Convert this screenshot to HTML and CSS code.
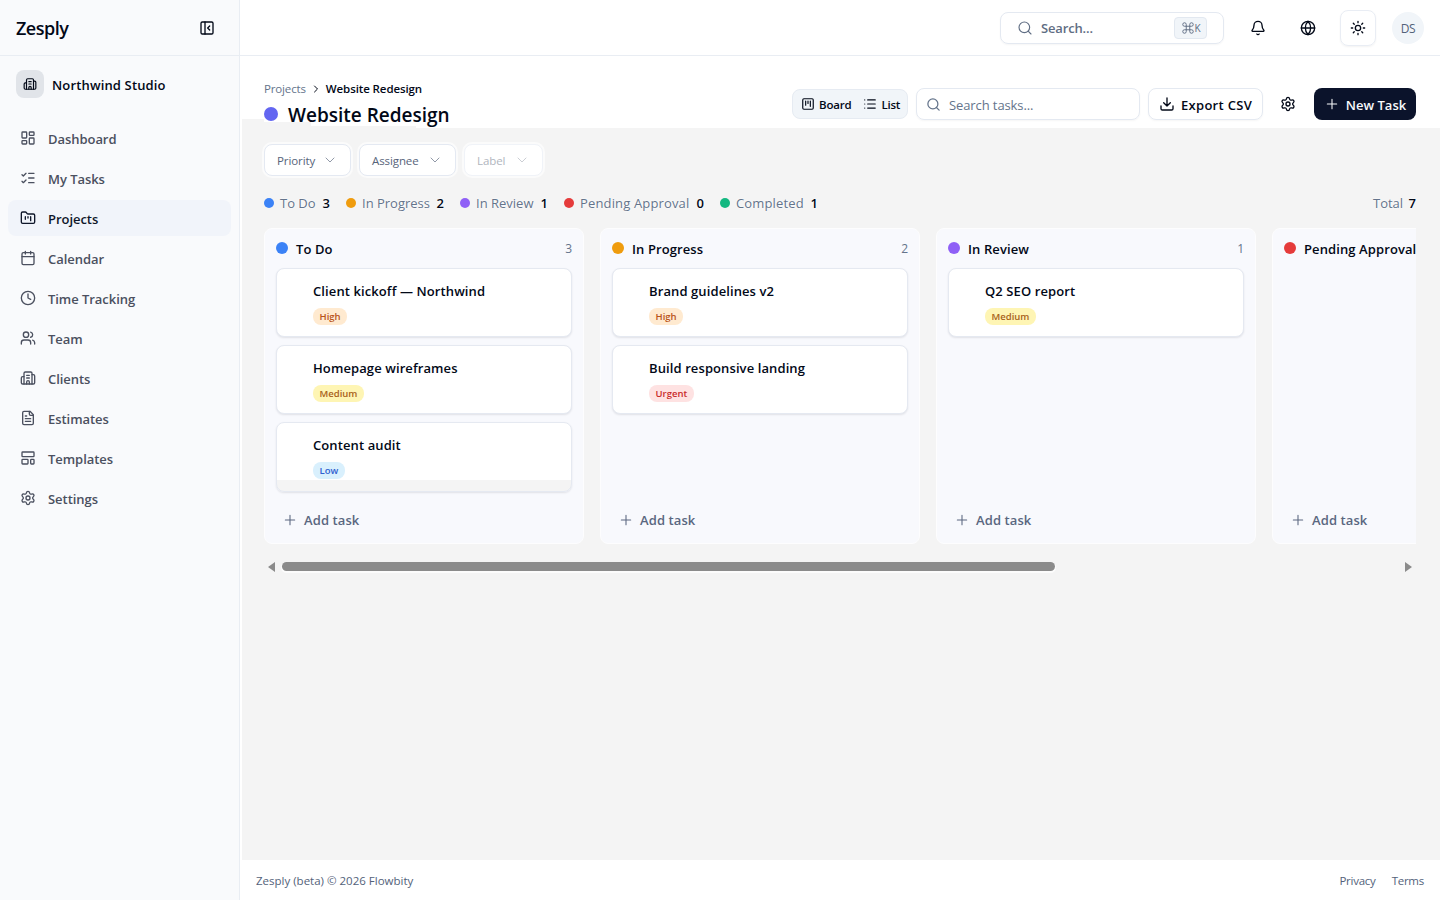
FILE: index.html
```
<!DOCTYPE html>
<html lang="en">
<head>
    <meta charset="UTF-8">
    <meta name="viewport" content="width=device-width, initial-scale=1.0">
    <title>Website Redesign - Zesply</title>
    <link rel="stylesheet" href="styles.css">
</head>
<body>
    <!-- Icon sprite -->
    <svg class="sprite" xmlns="http://www.w3.org/2000/svg">
        <symbol id="i-panel" viewBox="0 0 24 24"><rect x="3" y="3" width="18" height="18" rx="2"/><path d="M9 3v18M16 15l-3-3 3-3"/></symbol>
        <symbol id="i-building" viewBox="0 0 24 24"><path d="M10 12h4M10 8h4M14 21v-3a2 2 0 0 0-4 0v3"/><path d="M6 10H4a2 2 0 0 0-2 2v7a2 2 0 0 0 2 2h16a2 2 0 0 0 2-2V9a2 2 0 0 0-2-2h-2"/><path d="M6 21V5a2 2 0 0 1 2-2h8a2 2 0 0 1 2 2v16"/></symbol>
        <symbol id="i-dashboard" viewBox="0 0 24 24"><rect x="3" y="3" width="7" height="9" rx="1"/><rect x="14" y="3" width="7" height="5" rx="1"/><rect x="14" y="12" width="7" height="9" rx="1"/><rect x="3" y="16" width="7" height="5" rx="1"/></symbol>
        <symbol id="i-tasks" viewBox="0 0 24 24"><path d="M13 5h8M13 12h8M13 19h8M3 17l2 2 4-4M3 7l2 2 4-4"/></symbol>
        <symbol id="i-folder" viewBox="0 0 24 24"><path d="M4 20h16a2 2 0 0 0 2-2V8a2 2 0 0 0-2-2h-7.93a2 2 0 0 1-1.66-.9l-.82-1.2A2 2 0 0 0 7.93 3H4a2 2 0 0 0-2 2v13c0 1.1.9 2 2 2Z"/><path d="M8 10v4M12 10v2M16 10v6"/></symbol>
        <symbol id="i-calendar" viewBox="0 0 24 24"><path d="M8 2v4M16 2v4M3 10h18"/><rect x="3" y="4" width="18" height="18" rx="2"/></symbol>
        <symbol id="i-clock" viewBox="0 0 24 24"><circle cx="12" cy="12" r="10"/><path d="M12 6v6l4 2"/></symbol>
        <symbol id="i-users" viewBox="0 0 24 24"><path d="M16 21v-2a4 4 0 0 0-4-4H6a4 4 0 0 0-4 4v2M16 3.13a4 4 0 0 1 0 7.75M22 21v-2a4 4 0 0 0-3-3.87"/><circle cx="9" cy="7" r="4"/></symbol>
        <symbol id="i-file" viewBox="0 0 24 24"><path d="M15 2H6a2 2 0 0 0-2 2v16a2 2 0 0 0 2 2h12a2 2 0 0 0 2-2V7Z"/><path d="M14 2v4a2 2 0 0 0 2 2h4M10 9H8M16 13H8M16 17H8"/></symbol>
        <symbol id="i-template" viewBox="0 0 24 24"><rect x="3" y="3" width="18" height="7" rx="1"/><rect x="3" y="14" width="9" height="7" rx="1"/><rect x="16" y="14" width="5" height="7" rx="1"/></symbol>
        <symbol id="i-gear" viewBox="0 0 24 24"><path d="M9.67 4.14a2.34 2.34 0 0 1 4.66 0 2.34 2.34 0 0 0 3.32 1.91 2.34 2.34 0 0 1 2.33 4.03 2.34 2.34 0 0 0 0 3.84 2.34 2.34 0 0 1-2.33 4.03 2.34 2.34 0 0 0-3.32 1.91 2.34 2.34 0 0 1-4.66 0 2.34 2.34 0 0 0-3.32-1.91 2.34 2.34 0 0 1-2.33-4.03 2.34 2.34 0 0 0 0-3.84 2.34 2.34 0 0 1 2.33-4.03 2.34 2.34 0 0 0 3.32-1.91"/><circle cx="12" cy="12" r="3"/></symbol>
        <symbol id="i-search" viewBox="0 0 24 24"><circle cx="11" cy="11" r="8"/><path d="m21 21-4.3-4.3"/></symbol>
        <symbol id="i-bell" viewBox="0 0 24 24"><path d="M10.27 21a2 2 0 0 0 3.46 0M3.26 15.33A1 1 0 0 0 4 17h16a1 1 0 0 0 .74-1.67C19.41 13.96 18 12.5 18 8A6 6 0 0 0 6 8c0 4.5-1.41 5.96-2.74 7.33"/></symbol>
        <symbol id="i-globe" viewBox="0 0 24 24"><circle cx="12" cy="12" r="10"/><path d="M12 2a14.5 14.5 0 0 0 0 20 14.5 14.5 0 0 0 0-20M2 12h20"/></symbol>
        <symbol id="i-sun" viewBox="0 0 24 24"><circle cx="12" cy="12" r="4"/><path d="M12 2v2M12 20v2M4.93 4.93l1.41 1.41M17.66 17.66l1.41 1.41M2 12h2M20 12h2M6.34 17.66l-1.41 1.41M19.07 4.93l-1.41 1.41"/></symbol>
        <symbol id="i-board" viewBox="0 0 24 24"><rect x="3" y="3" width="18" height="18" rx="2"/><path d="M8 7v7M12 7v4M16 7v9"/></symbol>
        <symbol id="i-list" viewBox="0 0 24 24"><path d="M3 5h.01M3 12h.01M3 19h.01M8 5h13M8 12h13M8 19h13"/></symbol>
        <symbol id="i-download" viewBox="0 0 24 24"><path d="M12 15V3M21 15v4a2 2 0 0 1-2 2H5a2 2 0 0 1-2-2v-4M7 10l5 5 5-5"/></symbol>
        <symbol id="i-plus" viewBox="0 0 24 24"><path d="M5 12h14M12 5v14"/></symbol>
        <symbol id="i-down" viewBox="0 0 24 24"><path d="m6 9 6 6 6-6"/></symbol>
        <symbol id="i-right" viewBox="0 0 24 24"><path d="m9 18 6-6-6-6"/></symbol>
    </svg>

    <div class="app">
        <aside class="sidebar">
            <div class="brand">
                <span class="brand-name">Zesply</span>
                <svg class="icon"><use href="#i-panel"/></svg>
            </div>
            <div class="workspace">
                <span class="workspace-icon"><svg class="icon"><use href="#i-building"/></svg></span>
                <span class="workspace-name">Northwind Studio</span>
            </div>
            <nav class="nav">
                <a><svg class="icon"><use href="#i-dashboard"/></svg><span>Dashboard</span></a>
                <a><svg class="icon"><use href="#i-tasks"/></svg><span>My Tasks</span></a>
                <a class="active"><svg class="icon"><use href="#i-folder"/></svg><span>Projects</span></a>
                <a><svg class="icon"><use href="#i-calendar"/></svg><span>Calendar</span></a>
                <a><svg class="icon"><use href="#i-clock"/></svg><span>Time Tracking</span></a>
                <a><svg class="icon"><use href="#i-users"/></svg><span>Team</span></a>
                <a><svg class="icon"><use href="#i-building"/></svg><span>Clients</span></a>
                <a><svg class="icon"><use href="#i-file"/></svg><span>Estimates</span></a>
                <a><svg class="icon"><use href="#i-template"/></svg><span>Templates</span></a>
                <a><svg class="icon"><use href="#i-gear"/></svg><span>Settings</span></a>
            </nav>
        </aside>

        <div class="page">
            <header class="topbar">
                <div class="global-search">
                    <svg class="icon"><use href="#i-search"/></svg>
                    <span>Search...</span>
                    <kbd><svg class="cmd" viewBox="0 0 24 24"><path d="M15 6v12a3 3 0 1 0 3-3H6a3 3 0 1 0 3 3V6a3 3 0 1 0-3 3h12a3 3 0 1 0-3-3"/></svg>K</kbd>
                </div>
                <button class="icon-btn bell"><svg class="icon"><use href="#i-bell"/></svg></button>
                <button class="icon-btn"><svg class="icon"><use href="#i-globe"/></svg></button>
                <button class="icon-btn outlined"><svg class="icon"><use href="#i-sun"/></svg></button>
                <span class="avatar">DS</span>
            </header>

            <main class="main">
                <div class="page-head">
                    <div class="heading">
                        <div class="breadcrumb">
                            <span class="crumb">Projects</span>
                            <svg class="icon"><use href="#i-right"/></svg>
                            <span class="current">Website Redesign</span>
                        </div>
                        <h1><i class="dot indigo"></i><span>Website Redesign</span></h1>
                    </div>
                    <div class="tools">
                        <div class="view-toggle">
                            <span class="view"><svg class="icon"><use href="#i-board"/></svg><b>Board</b></span>
                            <span class="view"><svg class="icon"><use href="#i-list"/></svg><b>List</b></span>
                        </div>
                        <div class="task-search">
                            <svg class="icon"><use href="#i-search"/></svg>
                            <span>Search tasks...</span>
                        </div>
                        <button class="btn export"><svg class="icon"><use href="#i-download"/></svg><span>Export CSV</span></button>
                        <button class="gear-btn"><svg class="icon"><use href="#i-gear"/></svg></button>
                        <button class="btn primary"><svg class="icon"><use href="#i-plus"/></svg><span>New Task</span></button>
                    </div>
                </div>

                <div class="content">
                    <div class="filters">
                        <button class="filter priority"><span>Priority</span><svg class="icon"><use href="#i-down"/></svg></button>
                        <button class="filter assignee"><span>Assignee</span><svg class="icon"><use href="#i-down"/></svg></button>
                        <button class="filter label"><span>Label</span><svg class="icon"><use href="#i-down"/></svg></button>
                    </div>

                    <div class="summary">
                        <span class="stat s-todo"><i class="dot blue"></i><span>To Do</span><b>3</b></span>
                        <span class="stat s-progress"><i class="dot amber"></i><span>In Progress</span><b>2</b></span>
                        <span class="stat s-review"><i class="dot violet"></i><span>In Review</span><b>1</b></span>
                        <span class="stat s-pending"><i class="dot red"></i><span>Pending Approval</span><b>0</b></span>
                        <span class="stat s-done"><i class="dot green"></i><span>Completed</span><b>1</b></span>
                        <span class="stat total"><span>Total</span><b>7</b></span>
                    </div>

                    <div class="board">
                        <section class="column">
                            <div class="column-head"><i class="dot blue"></i><h2>To Do</h2><span class="count">3</span></div>
                            <article class="card"><h3>Client kickoff — Northwind</h3><span class="badge high">High</span></article>
                            <article class="card"><h3>Homepage wireframes</h3><span class="badge medium">Medium</span></article>
                            <article class="card shaded"><h3>Content audit</h3><span class="badge low">Low</span></article>
                            <div class="add-task"><svg class="icon"><use href="#i-plus"/></svg><span>Add task</span></div>
                        </section>
                        <section class="column">
                            <div class="column-head"><i class="dot amber"></i><h2>In Progress</h2><span class="count">2</span></div>
                            <article class="card"><h3>Brand guidelines v2</h3><span class="badge high">High</span></article>
                            <article class="card"><h3>Build responsive landing</h3><span class="badge urgent">Urgent</span></article>
                            <div class="add-task"><svg class="icon"><use href="#i-plus"/></svg><span>Add task</span></div>
                        </section>
                        <section class="column">
                            <div class="column-head"><i class="dot violet"></i><h2>In Review</h2><span class="count">1</span></div>
                            <article class="card"><h3>Q2 SEO report</h3><span class="badge medium">Medium</span></article>
                            <div class="add-task"><svg class="icon"><use href="#i-plus"/></svg><span>Add task</span></div>
                        </section>
                        <section class="column">
                            <div class="column-head"><i class="dot red"></i><h2>Pending Approval</h2></div>
                            <div class="add-task"><svg class="icon"><use href="#i-plus"/></svg><span>Add task</span></div>
                        </section>
                    </div>

                    <div class="scrollbar">
                        <i class="arrow left"></i>
                        <i class="thumb"></i>
                        <i class="arrow right"></i>
                    </div>
                </div>
            </main>

            <footer class="footer">
                <span class="copyright">Zesply (beta) © 2026 Flowbity</span>
                <span class="links"><a>Privacy</a><a>Terms</a></span>
            </footer>
        </div>
    </div>
</body>
</html>
```
FILE: styles.css
```
* {
    box-sizing: border-box;
}
body {
    margin: 0;
    font-family: 'Segoe UI', 'Open Sans', 'Noto Sans', sans-serif;
    font-size: 13px;
    line-height: 20px;
    color: #020817;
    background: #fff;
}
h1, h2, h3 {
    margin: 0;
}
button {
    font: inherit;
    color: inherit;
    background: none;
    border: none;
    padding: 0;
}
span, h2, h3, b {
    white-space: nowrap;
}
.sprite {
    position: absolute;
    width: 0;
    height: 0;
}
.icon {
    width: 16px;
    height: 16px;
    flex: none;
    fill: none;
    stroke: currentColor;
    stroke-width: 2;
    stroke-linecap: round;
    stroke-linejoin: round;
}
.app {
    display: flex;
    height: 900px;
    overflow: hidden;
}

/* Sidebar */
.sidebar {
    width: 240px;
    flex: none;
    background: #f9fafc;
    border-right: 1px solid #e9edf3;
}
.brand {
    height: 56px;
    display: flex;
    align-items: center;
    justify-content: space-between;
    padding: 0 24px 0 16px;
    border-bottom: 1px solid #e9edf3;
}
.brand-name {
    font-size: 18px;
    font-weight: 600;
    letter-spacing: -0.5px;
}
.workspace {
    display: flex;
    align-items: center;
    gap: 8px;
    padding: 14px 16px 0;
}
.workspace-icon {
    width: 28px;
    height: 28px;
    border-radius: 8px;
    background: #e1e4e9;
    display: flex;
    align-items: center;
    justify-content: center;
}
.workspace-icon .icon {
    width: 14px;
    height: 14px;
}
.workspace-name {
    font-weight: 600;
    letter-spacing: 0.15px;
    padding-top: 2px;
}
.nav {
    display: flex;
    flex-direction: column;
    gap: 4px;
    padding: 22px 8px 0;
}
.nav a {
    height: 36px;
    display: flex;
    align-items: center;
    gap: 12px;
    padding: 0 12px;
    border-radius: 8px;
    color: #4b505f;
    font-weight: 600;
    letter-spacing: -0.05px;
}
.nav a span {
    padding-top: 2px;
}
.nav .active {
    background: #f1f4fa;
    color: #0f172a;
}

/* Top bar */
.page {
    flex: 1;
    min-width: 0;
    display: flex;
    flex-direction: column;
}
.topbar {
    height: 56px;
    flex: none;
    display: flex;
    align-items: center;
    justify-content: flex-end;
    padding-right: 16px;
    border-bottom: 1px solid #e9edf3;
}
.global-search {
    width: 224px;
    height: 32px;
    display: flex;
    align-items: center;
    gap: 8px;
    padding: 0 16px;
    border: 1px solid #e4e9f1;
    border-radius: 8px;
    box-shadow: 0 1px 2px rgba(0,0,0,0.04);
    color: #5f6d83;
    font-weight: 600;
    letter-spacing: -0.15px;
}
.global-search .icon {
    stroke-width: 1.7;
}
kbd {
    width: 33px;
    height: 22px;
    margin-left: auto;
    display: flex;
    align-items: center;
    justify-content: center;
    border: 1px solid #e2e8f0;
    border-radius: 4px;
    background: #f1f5f9;
    font: 10px 'Open Sans', sans-serif;
}
.cmd {
    width: 14px;
    height: 14px;
    fill: none;
    stroke: currentColor;
    stroke-width: 1.6;
}
.icon-btn {
    width: 36px;
    height: 36px;
    margin-right: 14px;
    display: flex;
    align-items: center;
    justify-content: center;
}
.bell {
    margin-left: 16px;
}
.outlined {
    margin-right: 16px;
    border: 1px solid #e9edf4;
    border-radius: 8px;
    box-shadow: 0 1px 2px rgba(0,0,0,0.05);
}
.avatar {
    width: 32px;
    height: 32px;
    border-radius: 50%;
    background: #f1f5f9;
    color: #53627a;
    font-size: 12px;
    line-height: 33px;
    text-align: center;
    letter-spacing: -0.3px;
}

/* Page header */
.main {
    flex: 1;
    min-height: 0;
    background: #f4f4f4;
    border-left: 2px solid #fff;
}
.page-head {
    height: 72px;
    display: flex;
    justify-content: space-between;
    padding: 25px 24px 0 22px;
    /* stepped lower edge of the white band */
    background:
        linear-gradient(#f4f4f4, #f4f4f4) 0 63px / 22px 9px no-repeat,
        linear-gradient(#f4f4f4, #f4f4f4) 22px 66px / 47px 6px no-repeat,
        linear-gradient(#f4f4f4, #f4f4f4) 69px 70px / 105px 2px no-repeat,
        #fff;
}
.breadcrumb {
    display: flex;
    align-items: center;
    height: 16px;
    font-size: 11.5px;
}
.breadcrumb .icon {
    width: 12px;
    height: 12px;
    margin: 0 4px;
}
.crumb {
    color: #64748b;
    letter-spacing: -0.15px;
}
.current {
    font-weight: 600;
    letter-spacing: -0.1px;
}
h1 {
    display: flex;
    align-items: center;
    gap: 10px;
    height: 28px;
    margin-top: 4px;
    font-size: 19px;
    font-weight: 600;
}
.dot {
    flex: none;
    width: 10px;
    height: 10px;
    border-radius: 50%;
}
h1 .dot {
    width: 14px;
    height: 14px;
    margin-bottom: 2px;
}
.indigo { background: #6366f1; }
.blue { background: #3b82f6; }
.amber { background: #ef9c0e; }
.violet { background: #8f60f6; }
.red { background: #e53b3b; }
.green { background: #14b881; }
.tools {
    display: flex;
    align-items: center;
    height: 32px;
    margin-top: 7px;
}
.view-toggle {
    width: 116px;
    height: 30px;
    display: flex;
    align-items: center;
    gap: 12px;
    padding-left: 8px;
    margin-right: 8px;
    border: 1px solid #e6ebf2;
    border-radius: 8px;
    background: #f1f5f9;
}
.view {
    display: flex;
    align-items: center;
    gap: 4px;
    font-size: 11.5px;
    letter-spacing: -0.2px;
}
.view .icon {
    width: 14px;
    height: 14px;
}
.view b {
    font-weight: 600;
    padding-top: 1px;
}
.task-search {
    width: 224px;
    height: 32px;
    display: flex;
    align-items: center;
    gap: 8px;
    padding-left: 9px;
    margin-right: 8px;
    border: 1px solid #e4e9f1;
    border-radius: 8px;
    box-shadow: 0 1px 2px rgba(0,0,0,0.04);
    color: #64748b;
    letter-spacing: -0.1px;
}
.task-search .icon {
    width: 15px;
    height: 15px;
}
.task-search span, .btn span {
    padding-top: 2px;
}
.btn {
    height: 32px;
    display: flex;
    align-items: center;
    justify-content: center;
    gap: 6px;
    border-radius: 8px;
    font-weight: 600;
}
.export {
    width: 115px;
    border: 1px solid #e4e9f1;
    box-shadow: 0 1px 2px rgba(0,0,0,0.04);
    letter-spacing: 0.3px;
}
.gear-btn {
    width: 51px;
    height: 32px;
    padding-right: 1px;
    display: flex;
    align-items: center;
    justify-content: center;
}
.primary {
    width: 102px;
    background: #0b132b;
    color: #f8fafc;
}
.primary .icon, .add-task .icon {
    stroke-width: 1.6;
}

/* Filters and summary */
.content {
    padding: 16px 24px 0 22px;
}
.filters {
    display: flex;
    gap: 8px;
}
.filter {
    height: 32px;
    display: flex;
    align-items: center;
    justify-content: space-between;
    padding: 0 12px;
    border: 1px solid #e4e9f2;
    border-radius: 8px;
    background: #fff;
    box-shadow: 0 0 0 2px #fbfbfb;
    color: #57647a;
    font-size: 11.5px;
    letter-spacing: -0.1px;
}
.filter span {
    padding-top: 1px;
}
.filter .icon {
    opacity: 0.65;
    stroke-width: 1.5;
}
.priority { width: 87px; }
.assignee { width: 97px; }
.label {
    width: 79px;
    border-color: #f0f3f8;
    color: #b0b5be;
}
.summary {
    display: flex;
    height: 20px;
    margin-top: 17px;
}
.stat {
    display: flex;
    align-items: center;
    color: #64748b;
}
.stat .dot {
    margin-right: 6px;
    margin-bottom: 1px;
}
.stat b {
    margin-left: auto;
    color: #020817;
    font-weight: 600;
}
.stat span, .stat b {
    text-shadow: 0 0 2px #fff, 0 0 2px #fff;
}
.s-todo { width: 66px; margin-right: 16px; }
.s-progress { width: 98px; margin-right: 16px; }
.s-review { width: 88px; margin-right: 16px; }
.s-pending {
    width: 140px;
    margin-right: 16px;
    letter-spacing: 0.15px;
}
.s-done {
    width: 98px;
    letter-spacing: 0.15px;
}
.total {
    width: 43px;
    margin-left: auto;
}

/* Board */
.board {
    display: flex;
    gap: 16px;
    height: 316px;
    margin-top: 15px;
    overflow: hidden;
}
.column {
    width: 320px;
    flex: none;
    display: flex;
    flex-direction: column;
    gap: 8px;
    padding: 10px 11px 11px;
    border: 1px solid #fdfdfe;
    border-radius: 8px;
    background: #f8f9fd;
}
.column-head {
    display: flex;
    align-items: center;
    height: 20px;
    margin-bottom: 1px;
}
.column-head .dot {
    width: 12px;
    height: 12px;
    margin-right: 8px;
    margin-bottom: 2px;
}
h2, h3 {
    font-size: 13px;
    font-weight: 600;
    letter-spacing: 0.1px;
}
.count {
    margin-left: auto;
    color: #64748b;
    font-size: 12px;
}
.card {
    height: 69px;
    padding: 12px 36px;
    border: 1px solid #e5e9f1;
    border-radius: 8px;
    background: #fff;
    box-shadow: 0 1px 2px rgba(15,23,42,0.1);
}
.shaded {
    height: 70px;
    background: linear-gradient(#fff 57px, #f4f4f4 57px);
}
.badge {
    display: table;
    height: 16px;
    margin-top: 7px;
    padding: 0 6.5px;
    border-radius: 8px;
    font-size: 9.5px;
    line-height: 17px;
    font-weight: 600;
}
.high { background: #ffead0; color: #b8541a; }
.medium { background: #fef5b4; color: #a8621a; }
.low { background: #d9f0fd; color: #3060d0; }
.urgent { background: #fee2e2; color: #c92a2a; }
.add-task {
    display: flex;
    align-items: center;
    gap: 6px;
    height: 20px;
    margin-top: auto;
    margin-bottom: 2px;
    padding-left: 6px;
    color: #5a6780;
    font-weight: 600;
    letter-spacing: 0.1px;
}

/* Scrollbar */
.scrollbar {
    display: flex;
    align-items: center;
    height: 15px;
    margin-top: 15px;
    padding: 0 4px;
}
.thumb {
    width: 773px;
    height: 9px;
    margin-left: 7px;
    border-radius: 5px;
    background: #8b8b8b;
    box-shadow: 0 1px 0 1px #fcfcfc;
}
.arrow {
    border: 5px solid transparent;
}
.left {
    border-left: 0;
    border-right: 7px solid #8b8b8b;
}
.right {
    margin-left: auto;
    border-right: 0;
    border-left: 7px solid #8b8b8b;
}

/* Footer */
.footer {
    height: 40px;
    flex: none;
    display: flex;
    align-items: center;
    justify-content: space-between;
    padding: 2px 16px 0;
    color: #53627a;
    font-size: 11.5px;
}
.links {
    display: flex;
    gap: 16px;
    letter-spacing: -0.25px;
}
```
